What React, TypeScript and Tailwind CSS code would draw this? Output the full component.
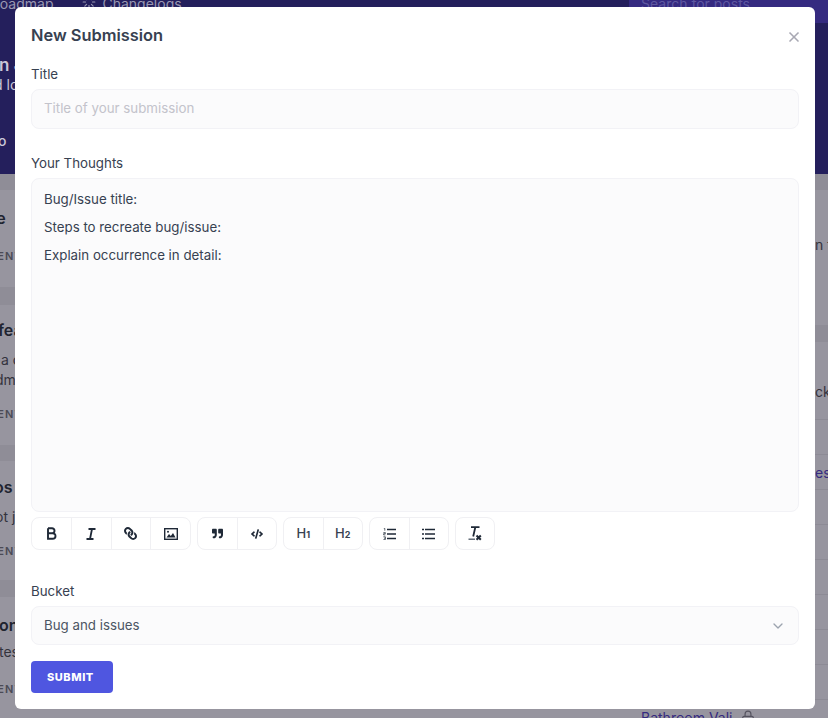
import { ChevronDown, Loader, Lock, X } from 'lucide-react';
import { FaLink, FaQuoteRight, FaCode } from 'react-icons/fa';

const font = { fontFamily: 'Inter, "Liberation Sans", sans-serif' };

function Heading({ n }: { n: string }) {
  return (
    <span className="flex items-baseline text-[#374151]">
      <span className="text-[13px] font-medium leading-none">H</span>
      <span className="text-[9px] font-bold leading-none">{n}</span>
    </span>
  );
}

function BoldIcon() {
  return (
    <svg width="11" height="13" viewBox="0 0 11 13" fill="none">
      <path
        d="M2 1.2v10.600h4.600c1.700 0 2.900-1.100 2.900-2.800 0-1.600-1.200-2.800-2.900-2.800H2m0 0h4c1.500 0 2.500-1 2.500-2.500S7.500 1.200 6 1.200H2"
        stroke="#1f2937"
        strokeWidth="1.9"
      />
    </svg>
  );
}

function ItalicIcon() {
  return (
    <svg width="12" height="12" viewBox="0 0 12 12" fill="none">
      <path d="M3.500 1h7M1.500 11h7M7 1 5 11" stroke="#1f2937" strokeWidth="1.800" />
    </svg>
  );
}

function ImageIcon() {
  return (
    <svg width="14" height="12" viewBox="0 0 14 12" fill="none">
      <rect x=".7" y=".7" width="12.600" height="10.600" stroke="#1f2937" strokeWidth="1.400" />
      <path d="M2.500 9.500 5 6l1.800 2L9 5l2.500 4.500z" fill="#1f2937" />
      <circle cx="4" cy="3.700" r="1" fill="#1f2937" />
    </svg>
  );
}

function OrderedList() {
  return (
    <svg width="13" height="12" viewBox="0 0 13 12" fill="none">
      <path d="M4 1.500h9M4 6h9M4 10.500h9" stroke="#1f2937" strokeWidth="1.700" />
      <path d="M.8.300h1v2.400M.4 4.600h2v1.100H.6v1.200h1.800M.4 8.800h2v2.800h-2M1 10.200h1.400" stroke="#1f2937" strokeWidth=".7" />
    </svg>
  );
}

function UnorderedList() {
  return (
    <svg width="13" height="12" viewBox="0 0 13 12" fill="none">
      <path d="M3 1.500h10M3 6h10M3 10.500h10" stroke="#1f2937" strokeWidth="1.700" />
      <path d="M0 1.500h2M0 6h2M0 10.500h2" stroke="#1f2937" strokeWidth="1.700" />
    </svg>
  );
}

function ClearFormat() {
  return (
    <svg width="14" height="15" viewBox="0 0 14 15" fill="none">
      <path d="M3 1.200h8.500M7.300 1.200 5.200 10.500" stroke="#1f2937" strokeWidth="1.800" />
      <path d="M.5 13.200h6.500" stroke="#4b5563" strokeWidth="1.300" />
      <path d="m8.500 9.500 4.300 4.300M12.800 9.500l-4.300 4.300" stroke="#1f2937" strokeWidth="2" />
    </svg>
  );
}

function ToolGroup({ items, width }: { items: React.ReactNode[]; width: string }) {
  return (
    <div className={`flex h-[33px] rounded-lg border border-[#f0f0f3] bg-white ${width}`}>
      {items.map((item, i) => (
        <div
          key={i}
          className="flex flex-1 items-center justify-center border-r border-[#f0f0f3] last:border-r-0 text-[#1f2937]"
        >
          {item}
        </div>
      ))}
    </div>
  );
}

// dithered separator between the cards of the page behind
function Band({ className }: { className: string }) {
  return <div className={`w-full bg-[#8f8d97] ${className}`} />;
}

function Meta({ className }: { className: string }) {
  return (
    <div className={`ml-[-44px] text-[11px] font-semibold leading-4 tracking-[0.1em] text-[#4b4a55] ${className}`}>
      COMMENT
    </div>
  );
}

// page behind the modal, only the edges show
function Backdrop() {
  return (
    <div className="flex h-[718px] flex-col overflow-hidden bg-[#97959f]">
      <div className="h-[174px] shrink-0 overflow-hidden bg-[#241f5c]">
        <div className="flex h-[23px] text-[14px] text-[#9a98b2]">
          <span className="ml-[-9px] mt-[-7px] h-4">Roadmap</span>
          <Loader className="ml-[29px] mt-[-5px] h-[14px] w-[14px]" />
          <span className="ml-[6px] mt-[-7px] h-4">Changelogs</span>
          <div className="ml-auto w-[199px] bg-[#352a80] pl-3 text-[#5f58a0]">
            <span className="mt-[-7px] block">Search for posts</span>
          </div>
        </div>
        <div className="w-[15px] overflow-hidden whitespace-nowrap text-[#c9c7d8]">
          <div className="ml-[-1px] mt-[30px] text-[17px] font-semibold leading-6">n J</div>
          <div className="ml-[-6px] mt-[-2px] text-[14px] leading-5">d lo</div>
          <div className="ml-[-2px] mt-[36px] text-[14px] font-medium leading-5">o</div>
        </div>
      </div>
      <div className="flex flex-1 justify-between">
        <div className="w-[15px] overflow-hidden whitespace-nowrap text-[#1f2430]">
          <Band className="h-4" />
          <div className="ml-[-8px] mt-[18px] text-[16px] font-semibold leading-5">le</div>
          <Meta className="mt-5" />
          <Band className="mt-[23px] h-[18px]" />
          <div className="ml-[-2px] mt-[15px] text-[16px] font-semibold leading-5">fea</div>
          <div className="ml-[1px] mt-[10px] text-[14px] leading-5 text-[#34333d]">a c</div>
          <div className="ml-[-5px] text-[14px] leading-5 text-[#34333d]">dm</div>
          <Meta className="mt-4" />
          <Band className="mt-[23px] h-4" />
          <div className="ml-[-6px] mt-4 text-[16px] font-semibold leading-5">os</div>
          <div className="ml-[-5px] mt-[10px] text-[14px] leading-5 text-[#34333d]">ot j</div>
          <Meta className="mt-4" />
          <Band className="mt-[21px] h-[17px]" />
          <div className="ml-[-1px] mt-[18px] text-[16px] font-semibold leading-5">on</div>
          <div className="ml-[-1px] mt-[7px] text-[14px] leading-5 text-[#34333d]">tes</div>
          <Meta className="mt-[19px]" />
        </div>
        <div className="w-[199px] overflow-hidden whitespace-nowrap text-[14px] text-[#34333d]">
          <Band className="h-4" />
          <div className="mt-[45px] pl-[186px] leading-5">n t</div>
          <Band className="mt-[70px] h-[17px]" />
          <div className="mt-[40px] pl-[186px] leading-5">ck</div>
          <div className="mt-[17px] h-[35px] border-t border-[#8d8b95]" />
          <div className="h-[35px] border-t border-[#8d8b95] pl-[186px] leading-[35px] text-[#352a80]">es:</div>
          {[0, 1, 2, 3, 4, 5].map((i) => (
            <div key={i} className="h-[35px] border-t border-[#8d8b95]" />
          ))}
          <div className="flex h-[35px] items-center gap-2 border-t border-[#8d8b95] pl-3 text-[#352a80]">
            Bathroom Vali
            <Lock className="h-[14px] w-[14px] text-[#55535f]" />
          </div>
        </div>
      </div>
    </div>
  );
}

export default function App() {
  return (
    <div className="relative h-[718px] w-[828px] overflow-hidden" style={font}>
      <Backdrop />
      <div className="absolute left-[15px] top-[7px] flex h-[702px] w-[800px] flex-col rounded-md bg-white px-4 text-[#374151]">
        <div className="flex h-[56px] items-start justify-between pt-[18px]">
          <h1 className="text-[16.4px] font-semibold leading-[20px] text-[#374151]">New Submission</h1>
          <X className="mr-[-3px] mt-[4px] h-4 w-4 text-[#a8a8b3]" strokeWidth={2.5} />
        </div>

        <label className="text-[13.3px] leading-[22px]">Title</label>
        <div className="mt-[4px] flex h-10 items-center rounded-lg border border-[#f2f2f6] bg-[#fbfbfc] px-3 text-[13.3px] text-[#c3c3cb]">
          Title of your submission
        </div>

        <label className="mt-[23px] text-[13.3px] leading-[22px]">Your Thoughts</label>
        <div className="mt-[4px] h-[334px] rounded-lg border border-[#f2f2f6] bg-[#fbfbfc] px-3 pt-[10px] text-[13.3px] leading-[20px] text-[#374151]">
          <p>Bug/Issue title:</p>
          <p className="mt-2">Steps to recreate bug/issue:</p>
          <p className="mt-2">Explain occurrence in detail:</p>
        </div>

        <div className="mt-[5px] flex gap-[6px]">
          <ToolGroup
            width="w-[160px]"
            items={[
              <BoldIcon key="b" />,
              <ItalicIcon key="i" />,
              <FaLink key="l" className="h-[13px] w-[13px] -scale-x-100" />,
              <ImageIcon key="m" />,
            ]}
          />
          <ToolGroup
            width="w-[80px]"
            items={[
              <FaQuoteRight key="q" className="h-[11px] w-[11px]" />,
              <FaCode key="c" className="h-[12px] w-[12px]" />,
            ]}
          />
          <ToolGroup width="w-[80px]" items={[<Heading key="1" n="1" />, <Heading key="2" n="2" />]} />
          <ToolGroup width="w-[80px]" items={[<OrderedList key="o" />, <UnorderedList key="u" />]} />
          <ToolGroup width="w-[40px]" items={[<ClearFormat key="x" />]} />
        </div>

        <label className="mt-[30px] text-[13.3px] leading-[22px]">Bucket</label>
        <div className="mt-[4px] flex h-[39px] items-center justify-between rounded-lg border border-[#f2f2f6] bg-[#fbfbfc] pl-3 pr-[12px] text-[13.3px] text-[#4b5563]">
          <span>Bug and issues</span>
          <ChevronDown className="h-4 w-4 text-[#9ca3af]" />
        </div>

        <button className="mt-4 h-8 w-[82px] rounded bg-[#4f56e0] pl-4 text-left text-[11px] font-extrabold tracking-wider text-white">
          SUBMIT
        </button>
      </div>
    </div>
  );
}
